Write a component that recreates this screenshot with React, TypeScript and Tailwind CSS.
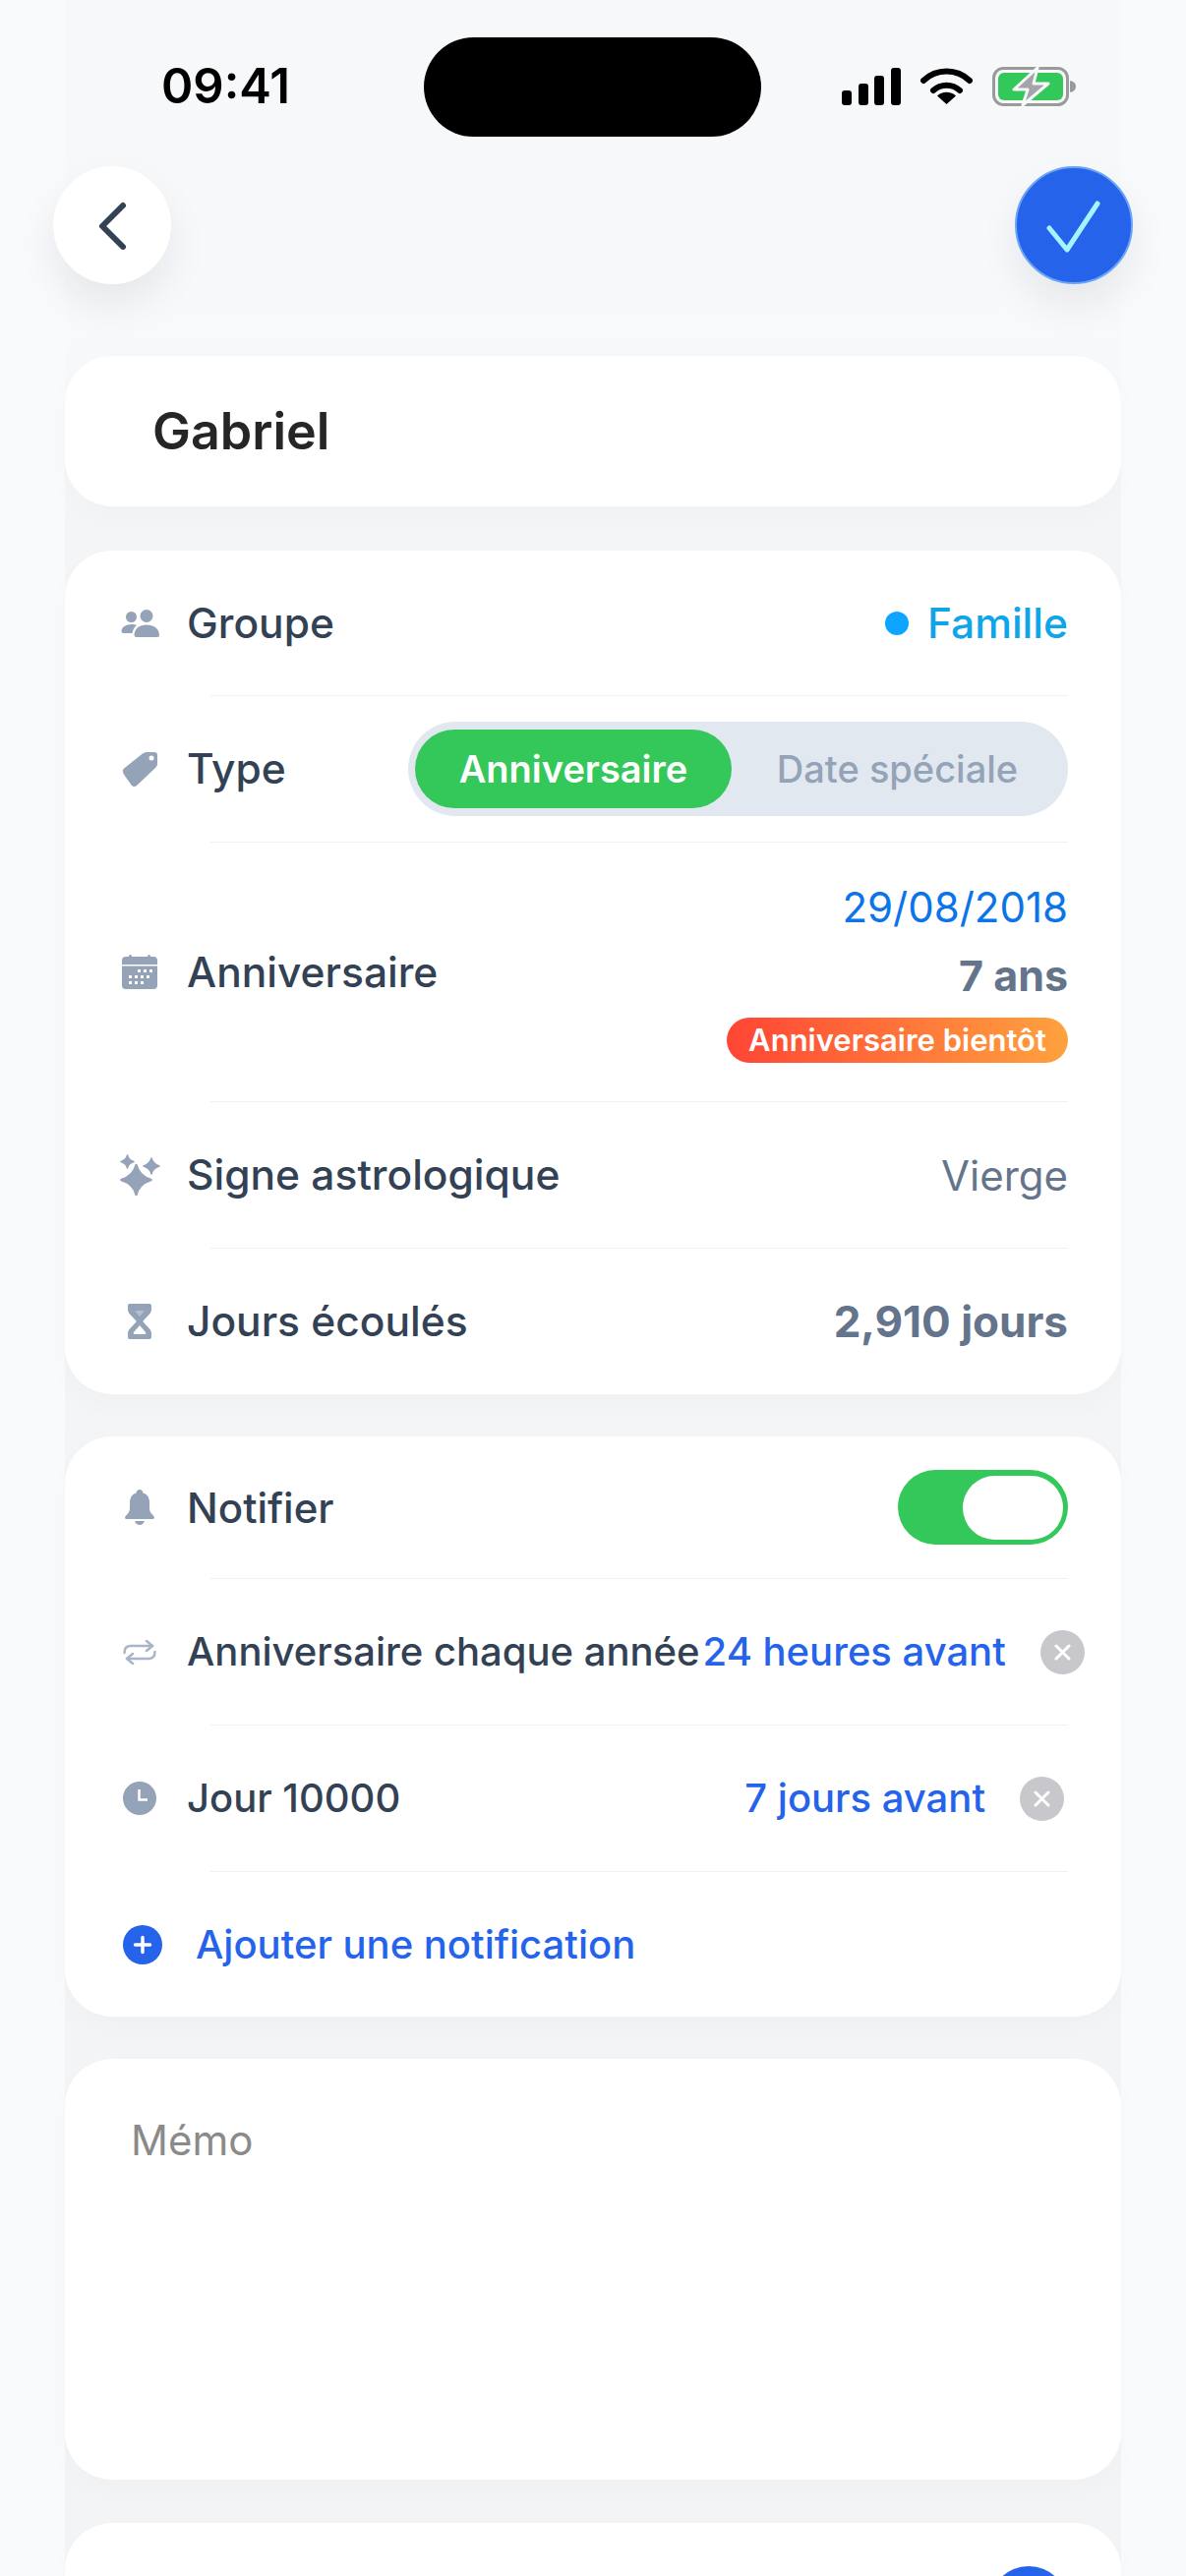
import React from 'react';

const StatusIcons = () => (
  <div className="flex items-start gap-[20px] mt-[68px] ml-[82px]">
    <svg width="60" height="39" viewBox="0 0 60 39" fill="#000">
      <rect x="0" y="24" width="10" height="15" rx="3" />
      <rect x="17" y="17" width="10" height="22" rx="3" />
      <rect x="33" y="9" width="10" height="30" rx="3" />
      <rect x="50" y="1" width="10" height="38" rx="3" />
    </svg>
    <svg width="53" height="39" viewBox="0 0 53 39">
      <path d="M3 14 A34 34 0 0 1 50 14" fill="none" stroke="#000" strokeWidth="6" strokeLinecap="round" />
      <path d="M13 24 A20 20 0 0 1 40 24" fill="none" stroke="#000" strokeWidth="6" strokeLinecap="round" />
      <path d="M26.5 38 L17 29.5 A14 14 0 0 1 36 29.5Z" fill="#000" />
    </svg>
    <svg width="86" height="40" viewBox="0 0 86 40">
      <rect x="1.5" y="1.5" width="75" height="37" rx="10" fill="none" stroke="#9a9a9a" strokeWidth="3" />
      <rect x="6" y="6" width="66" height="28" rx="6" fill="#34c759" />
      <path d="M79 14 Q85 15 85 20 Q85 25 79 26Z" fill="#9a9a9a" />
      <path d="M46 1 L22 23 H36 L31 39 L57 17 H42Z" fill="#a3a5a8" stroke="#f7f8fa" strokeWidth="3" strokeLinejoin="round" />
    </svg>
  </div>
);

const UsersIcon = () => (
  <svg width="39" height="28" viewBox="0 0 39 28" fill="#94a3b8">
    <circle cx="10.5" cy="7.5" r="5.5" />
    <circle cx="26" cy="6.5" r="6.5" />
    <path d="M0.5 22 C0.5 18 5 15 10.5 15 C12.5 15 14.5 15.3 16 16 C13.5 18 12 20.5 11.5 24 H2.5 Q0.5 24 0.5 22Z" />
    <path d="M13.5 26 C13.5 19.5 19 15.5 26 15.5 C33 15.5 39 19.5 39 26 Q39 28 37 28 H15.5 Q13.5 28 13.5 26Z" />
  </svg>
);

const TagIcon = () => (
  <svg width="36" height="37" viewBox="0 0 36 37">
    <path d="M1.5 18 L21 2.5 Q23 1 25 1 H33 Q36 1 36 4 V13 Q36 15.5 34 17 L15 35 Q12.5 37 10 35 L1.5 23 Q0 20 1.5 18Z" fill="#94a3b8" />
    <circle cx="30" cy="7" r="2.5" fill="#fff" />
  </svg>
);

const CalendarIcon = () => (
  <svg width="36" height="35" viewBox="0 0 36 35">
    <rect x="0" y="2" width="36" height="33" rx="4" fill="#94a3b8" />
    <rect x="7" y="0" width="3" height="5" rx="1.5" fill="#94a3b8" />
    <rect x="26" y="0" width="3" height="5" rx="1.5" fill="#94a3b8" />
    <rect x="0" y="10" width="36" height="1.5" fill="#fff" />
    <g fill="#fff">
      <rect x="16" y="15" width="3" height="3" /><rect x="22" y="15" width="3" height="3" /><rect x="28" y="15" width="3" height="3" />
      <rect x="7" y="21" width="3" height="3" /><rect x="13" y="21" width="3" height="3" /><rect x="19" y="21" width="3" height="3" /><rect x="25" y="21" width="3" height="3" />
      <rect x="7" y="27" width="3" height="3" /><rect x="13" y="27" width="3" height="3" /><rect x="19" y="27" width="3" height="3" />
    </g>
  </svg>
);

const SparklesIcon = () => (
  <svg width="41" height="42" viewBox="0 0 41 42" fill="#94a3b8" stroke="#94a3b8" strokeLinejoin="round">
    <path d="M16.5 11 Q19 22 31.5 26 Q19 30 16.5 41 Q14 30 1.5 26 Q14 22 16.5 11Z" strokeWidth="2.5" />
    <path d="M7.5 1 Q8.5 6 14 7.5 Q8.5 9 7.5 14 Q6.5 9 1 7.5 Q6.5 6 7.5 1Z" strokeWidth="1.5" />
    <path d="M32 4 Q33.5 10 40 12 Q33.5 14 32 20 Q30.5 14 24 12 Q30.5 10 32 4Z" strokeWidth="1.5" />
  </svg>
);

const HourglassIcon = () => (
  <svg width="26" height="36" viewBox="0 0 26 36">
    <path d="M1 2 Q1 0 3 0 H23 Q25 0 25 2 V6 Q25 8 23.5 10 L17 17 Q16 18 17 19 L23.5 26 Q25 28 25 30 V34 Q25 36 23 36 H3 Q1 36 1 34 V30 Q1 28 2.5 26 L9 19 Q10 18 9 17 L2.5 10 Q1 8 1 6Z" fill="#94a3b8" />
    <path d="M13 22 L19 29 Q20 31 18 31 H8 Q6 31 7 29Z" fill="#fff" />
    <path d="M8 7 H18 L13 13Z" fill="#fff" opacity="0.3" />
  </svg>
);

const BellIcon = () => (
  <svg width="30" height="36" viewBox="0 0 30 36" fill="#94a3b8">
    <path d="M15 0 Q18 0 18.5 3.5 Q25 5.5 25 13 V19 Q25 23 28.5 26 Q30 27.5 30 28.5 Q30 30 28 30 H2 Q0 30 0 28.5 Q0 27.5 1.5 26 Q5 23 5 19 V13 Q5 5.5 11.5 3.5 Q12 0 15 0Z" />
    <path d="M10 32 H20 Q18.5 36 15 36 Q11.5 36 10 32Z" />
  </svg>
);

const RepeatIcon = () => (
  <svg width="34" height="25" viewBox="0 0 34 25" fill="none" stroke="#a9b5c6" strokeWidth="2.5" strokeLinecap="round" strokeLinejoin="round">
    <path d="M1.5 13 Q1.5 6 8 6 H30" />
    <path d="M24 1 L30 6 L24 11" />
    <path d="M32.5 12 Q32.5 19 26 19 H4" />
    <path d="M10 14 L4 19 L10 24" />
  </svg>
);

const ClockIcon = () => (
  <svg width="34" height="34" viewBox="0 0 34 34">
    <circle cx="17" cy="17" r="17" fill="#94a3b8" />
    <path d="M16.5 8 V18.5 H25" fill="none" stroke="#fff" strokeWidth="2.5" />
  </svg>
);

const PlusIcon = () => (
  <svg width="40" height="40" viewBox="0 0 40 40">
    <circle cx="20" cy="20" r="20" fill="#2563eb" />
    <path d="M20 12.5 V27.5 M12.5 20 H27.5" stroke="#fff" strokeWidth="3.5" strokeLinecap="round" />
  </svg>
);

const RemoveButton = () => (
  <div className="w-[45px] h-[45px] shrink-0 rounded-full bg-[#c7c7cc] flex items-center justify-center">
    <svg width="17" height="17" viewBox="0 0 17 17">
      <path d="M2 2 L15 15 M15 2 L2 15" stroke="#fff" strokeWidth="3" strokeLinecap="round" />
    </svg>
  </div>
);

const Divider = () => <div className="h-px ml-[148px] mr-[54px] bg-[#eef1f5]" />;

interface RowProps {
  icon: React.ReactNode;
  label: string;
  height: string;
  textSize?: string;
  children?: React.ReactNode;
}

const Row: React.FC<RowProps> = ({ icon, label, height, textSize = 'text-[42.5px]', children }) => (
  <div className={`flex items-center justify-between pl-[55px] pr-[54px] ${height}`}>
    <div className="flex items-center shrink-0">
      <div className="w-[42px] flex justify-center shrink-0">{icon}</div>
      <span className={`ml-[27px] font-medium text-[#334155] whitespace-nowrap ${textSize}`}>{label}</span>
    </div>
    {children}
  </div>
);

const Card: React.FC<{ className?: string; children: React.ReactNode }> = ({ className, children }) => (
  <div className={`bg-white rounded-[48px] shadow-[0_10px_30px_rgba(15,23,42,0.02)] ${className ?? ''}`}>{children}</div>
);

export default function App() {
  return (
    <div className="h-[2620px] overflow-hidden bg-[#f9fafc] font-['Inter',sans-serif]">
      <div className="w-[1074px] h-full mx-auto bg-[linear-gradient(180deg,#f7f8fa_0%,#f8f9fb_13%,#f4f5f7_20%,#f3f4f6_100%)]">
        <div className="flex items-start h-[169px]">
          <div className="ml-[98px] w-[267px] mt-[58px] text-[49px] leading-[60px] font-semibold text-black">09:41</div>
          <div className="w-[343px] h-[101px] mt-[38px] rounded-full bg-black" />
          <StatusIcons />
        </div>

        <div className="flex justify-between -mx-[12px]">
          <button className="w-[120px] h-[120px] rounded-full bg-white shadow-[0_20px_40px_rgba(15,23,42,0.08)] flex items-center justify-center">
            <svg width="120" height="120" viewBox="0 0 120 120" fill="none">
              <path d="M71 40 L50 61 L71 82" stroke="#334155" strokeWidth="6" strokeLinecap="round" strokeLinejoin="round" />
            </svg>
          </button>
          <button className="w-[120px] h-[120px] rounded-full bg-[#2563eb] border-2 border-[#6aa5f5] shadow-[0_20px_40px_rgba(15,23,42,0.08)] flex items-center justify-center">
            <svg width="116" height="116" viewBox="0 0 116 116" fill="none">
              <path d="M33 61 L51 83 L82 36" stroke="#a5f3fc" strokeWidth="5" strokeLinecap="round" strokeLinejoin="round" />
            </svg>
          </button>
        </div>

        <Card className="mt-[73px] h-[153px] flex items-center pl-[89px]">
          <span className="text-[52px] font-semibold text-[#262626]">Gabriel</span>
        </Card>

        <Card className="mt-[45px]">
          <Row icon={<UsersIcon />} label="Groupe" height="h-[147px]">
            <div className="flex items-center gap-[19px]">
              <div className="w-[24px] h-[24px] rounded-full bg-[#0ea5ff]" />
              <span className="text-[42.5px] font-medium text-[#0ea5e9]">Famille</span>
            </div>
          </Row>
          <Divider />
          <Row icon={<TagIcon />} label="Type" height="h-[148px]">
            <div className="w-[671px] h-[96px] rounded-full bg-[#e2e8f0] flex items-center pl-[7px]">
              <div className="w-[322px] h-[80px] rounded-full bg-[#34c759] flex items-center justify-center text-[38px] font-semibold text-white">
                Anniversaire
              </div>
              <div className="flex-1 text-center pr-[5px] text-[38px] font-medium text-[#94a3b8]">Date spéciale</div>
            </div>
          </Row>
          <Divider />
          <Row icon={<CalendarIcon />} label="Anniversaire" height="h-[263px]">
            <div className="flex flex-col items-end">
              <span className="text-[42px] leading-[54px] text-[#0a74e8]">29/08/2018</span>
              <span className="mt-[15px] text-[43px] leading-[54px] font-bold text-[#64748b]">7 ans</span>
              <div className="mt-[16px] w-[347px] h-[46px] rounded-full bg-[linear-gradient(90deg,#ff4535,#ffa23e)] flex items-center justify-center text-[31px] font-semibold text-white">
                Anniversaire bientôt
              </div>
            </div>
          </Row>
          <Divider />
          <Row icon={<SparklesIcon />} label="Signe astrologique" height="h-[148px]">
            <span className="text-[42px] text-[#64748b]">Vierge</span>
          </Row>
          <Divider />
          <Row icon={<HourglassIcon />} label="Jours écoulés" height="h-[148px]">
            <span className="text-[44px] font-bold text-[#64748b]">2,910 jours</span>
          </Row>
        </Card>

        <Card className="mt-[43px]">
          <Row icon={<BellIcon />} label="Notifier" height="h-[144px]" textSize="text-[42px]">
            <div className="w-[173px] h-[76px] rounded-full bg-[#34c759] flex items-center justify-end pr-[5px]">
              <div className="w-[102px] h-[65px] rounded-full bg-white" />
            </div>
          </Row>
          <Divider />
          <div className="flex items-center h-[148px] pl-[55px]">
            <div className="w-[42px] flex justify-center shrink-0"><RepeatIcon /></div>
            <span className="ml-[27px] text-[40px] font-medium text-[#334155] whitespace-nowrap">Anniversaire chaque année</span>
            <span className="ml-[3px] text-[40px] font-medium text-[#2563eb] whitespace-nowrap">24 heures avant</span>
            <div className="ml-[35px]"><RemoveButton /></div>
          </div>
          <Divider />
          <Row icon={<ClockIcon />} label="Jour 10000" height="h-[148px] !pr-[58px]" textSize="text-[40px]">
            <div className="flex items-center gap-[35px]">
              <span className="text-[40px] font-medium text-[#2563eb]">7 jours avant</span>
              <RemoveButton />
            </div>
          </Row>
          <Divider />
          <div className="flex items-center h-[147px] pl-[59px]">
            <PlusIcon />
            <span className="ml-[34px] text-[40px] font-medium text-[#2563eb]">Ajouter une notification</span>
          </div>
        </Card>

        <Card className="mt-[43px] h-[428px] pl-[67px] pt-[56px]">
          <span className="text-[42px] leading-[54px] text-[#8a8a8a]">Mémo</span>
        </Card>

        <Card className="mt-[44px] h-[200px] flex justify-end pr-[54px] pt-[44px]">
          <div className="w-[80px] h-[80px] rounded-full bg-[#2563eb]" />
        </Card>
      </div>
    </div>
  );
}
